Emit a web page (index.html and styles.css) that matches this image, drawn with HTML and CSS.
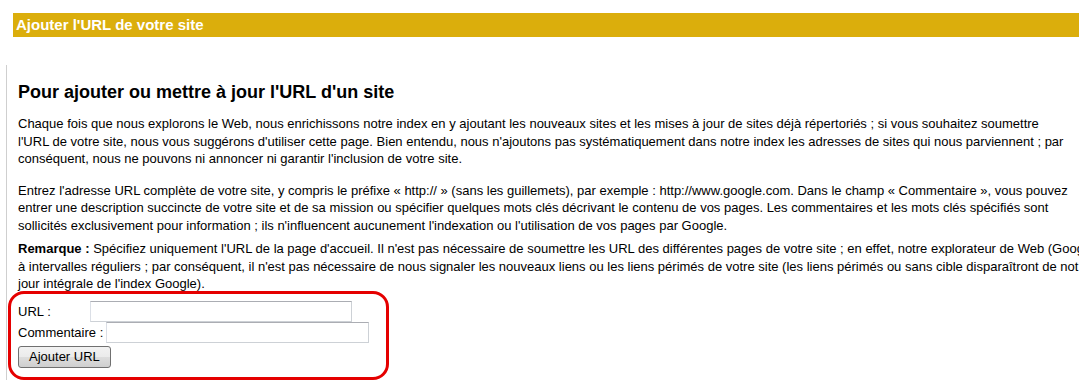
FILE: index.html
```html
<!DOCTYPE html>
<html lang="fr">
<head>
  <meta charset="UTF-8">
  <title>Ajouter l'URL de votre site</title>
  <link rel="stylesheet" href="styles.css">
</head>
<body>
  <div class="title-bar">Ajouter l'URL de votre site</div>

  <div class="content">
    <h2>Pour ajouter ou mettre à jour l'URL d'un site</h2>

    <p>Chaque fois que nous explorons le Web, nous enrichissons notre index en y ajoutant les nouveaux sites et les mises à jour de sites déjà répertoriés ; si vous souhaitez soumettre<br>
    l'URL de votre site, nous vous suggérons d'utiliser cette page. Bien entendu, nous n'ajoutons pas systématiquement dans notre index les adresses de sites qui nous parviennent ; par<br>
    conséquent, nous ne pouvons ni annoncer ni garantir l'inclusion de votre site.</p>

    <p class="tight">Entrez l'adresse URL complète de votre site, y compris le préfixe « http:// » (sans les guillemets), par exemple : http://www.google.com. Dans le champ « Commentaire », vous pouvez<br>
    entrer une description succincte de votre site et de sa mission ou spécifier quelques mots clés décrivant le contenu de vos pages. Les commentaires et les mots clés spécifiés sont<br>
    sollicités exclusivement pour information ; ils n'influencent aucunement l'indexation ou l'utilisation de vos pages par Google.</p>

    <p class="note"><b>Remarque :</b> Spécifiez uniquement l'URL de la page d'accueil. Il n'est pas nécessaire de soumettre les URL des différentes pages de votre site ; en effet, notre explorateur de Web (Google<br>
    à intervalles réguliers ; par conséquent, il n'est pas nécessaire de nous signaler les nouveaux liens ou les liens périmés de votre site (les liens périmés ou sans cible disparaîtront de not<br>
    jour intégrale de l'index Google).</p>

    <form class="add-url">
      <div class="row">
        <label for="q">URL :</label>
        <input type="text" id="q" class="url-field">
      </div>
      <div class="row">
        <label for="dq">Commentaire :</label>
        <input type="text" id="dq" class="comment-field">
      </div>
      <button type="button" class="submit">Ajouter URL</button>
    </form>
  </div>
</body>
</html>
```

FILE: styles.css
```css
html, body {
  margin: 0;
  overflow: hidden;
  background: #fff;
}
body {
  font-family: "Liberation Sans", Arial, sans-serif;
  font-size: 13px;
  color: #000;
}
/* yellow page title */
.title-bar {
  margin: 13px 0 0 13px;
  height: 24px;
  line-height: 24px;
  padding-left: 3px;
  background-color: #dbae0c;
  color: #fff;
  font-weight: bold;
  font-size: 15px;
}
.content {
  margin: 28px 0 0 6px;
  padding: 16px 0 0 11px;
  border-left: 1px solid #cfcfcf;
}
.content h2 {
  margin: 0 0 12px 0;
  font-size: 18px;
  line-height: 22px;
}
.content p {
  margin: 0 0 14px 0;
  line-height: 17.5px;
  white-space: nowrap;
}
.content p.tight {
  margin-bottom: 6px;
}
.content p.note {
  margin-bottom: -2px;
}
/* form with red highlight */
.add-url {
  box-sizing: border-box;
  margin-left: -10px;
  width: 381px;
  padding: 7px 0 9px 7px;
  border: 3px solid #e50000;
  border-radius: 16px;
}
.add-url .row {
  display: flex;
  align-items: center;
  height: 21px;
}
.add-url label {
  flex: none;
}
.add-url input {
  height: 21px;
  box-sizing: border-box;
  padding: 1px 3px;
  border: 1px solid #cdd1d6;
  border-top-color: #abadb3;
  border-left-color: #dbdfe6;
  font: 13px "Liberation Sans", Arial, sans-serif;
}
.url-field {
  margin-left: 39px;
  width: 262px;
}
.comment-field {
  margin-left: 3px;
  width: 263px;
}
.submit {
  display: block;
  margin-top: 3px;
  height: 22px;
  padding: 0 10px;
  font: 13px "Liberation Sans", Arial, sans-serif;
  color: #000;
  border: 1px solid #707070;
  border-radius: 3px;
  background: linear-gradient(#f2f2f2 0%, #ebebeb 50%, #dddddd 51%, #cfcfcf 100%);
}
```
